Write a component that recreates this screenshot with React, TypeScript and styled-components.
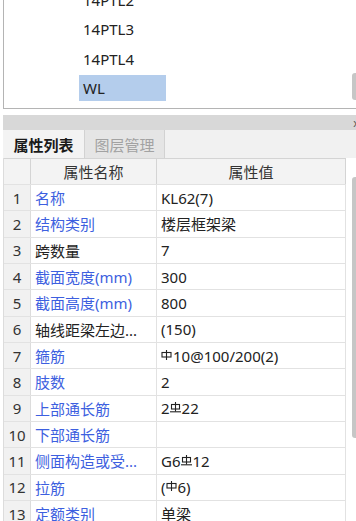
import React from "react";
import styled, { createGlobalStyle } from "styled-components";

const Global = createGlobalStyle`
  html, body { margin: 0; padding: 0; background: #ffffff; }
  body {
    width: 356px; height: 521px; overflow: hidden;
    font-family: "Noto Sans", "Noto Sans CJK SC", sans-serif;
    font-size: 15px; color: #222;
  }
  * { box-sizing: border-box; }
`;

const Page = styled.div`
  width: 356px;
  height: 521px;
  overflow: hidden;
  display: flex;
  flex-direction: column;
  padding-left: 3px;
`;

const TopPanel = styled.div`
  position: relative;
  height: 109px;
  flex: none;
  border-left: 1px solid #b4b4b4;
  border-bottom: 1px solid #b4b4b4;
  overflow: hidden;
  background: #fff;
`;

const List = styled.div`
  display: flex;
  flex-direction: column;
  gap: 3.5px;
  margin-top: -13.5px;
  padding-left: 75px;
`;

const Item = styled.div<{ $sel?: boolean }>`
  height: 26px;
  width: 87px;
  padding-left: 4px;
  display: flex;
  align-items: center;
  background: ${(p) => (p.$sel ? "#b4cdec" : "transparent")};
  color: #222;
`;

const Thumb = styled.div<{ $top: number; $h: number }>`
  position: absolute;
  right: 0;
  top: ${(p) => p.$top}px;
  width: 4px;
  height: ${(p) => p.$h}px;
  background: #c6c6c6;
  border-radius: 3px 0 0 3px;
`;

const Bottom = styled.div`
  position: relative;
  margin-top: 6px;
  flex: 1;
  display: flex;
  flex-direction: column;
`;

const TitleBar = styled.div`
  height: 15px;
  background: #d8d8d8;
  display: flex;
  justify-content: flex-end;
  align-items: center;
  font-size: 11px;
  color: #555;
  line-height: 1;
  margin-right: -3px;
  overflow: hidden;
`;

const TabRow = styled.div`
  height: 28px;
  display: flex;
  background: #f1f1f1;
`;

const Tab = styled.div<{ $active?: boolean }>`
  width: 81px;
  display: flex;
  align-items: center;
  justify-content: center;
  background: ${(p) => (p.$active ? "#f3f3f3" : "#e5e5e5")};
  color: ${(p) => (p.$active ? "#1a1a1a" : "#a2a2a2")};
  font-weight: ${(p) => (p.$active ? 600 : 400)};
  border-right: ${(p) => (p.$active ? "none" : "1px solid #d2d2d2")};
  border-left: ${(p) => (p.$active ? "none" : "1px solid #d2d2d2")};
`;

const Grid = styled.div`
  width: 343px;
  border-left: 1px solid #dcdcdc;
`;

const Row = styled.div<{ $head?: boolean }>`
  display: grid;
  grid-template-columns: 27px 126px 189px;
  height: ${(p) => (p.$head ? 27 : 26.33)}px;
  border-top: ${(p) => (p.$head ? "1px solid #d4d4d4" : "none")};
  border-bottom: 1px solid #e2e2e2;
  background: ${(p) => (p.$head ? "#f3f3f3" : "#fff")};
`;

const NumCell = styled.div`
  background: #f1f1f1;
  border-right: 1px solid #dcdcdc;
  display: flex;
  align-items: center;
  justify-content: center;
  color: #333;
`;

const HeadCell = styled.div`
  border-right: 1px solid #d4d4d4;
  display: flex;
  align-items: center;
  justify-content: center;
  color: #333;
`;

const NameCell = styled.div<{ $blue?: boolean }>`
  border-right: 1px solid #e2e2e2;
  display: flex;
  align-items: center;
  padding-left: 4px;
  white-space: nowrap;
  overflow: hidden;
  color: ${(p) => (p.$blue ? "#3d5fe0" : "#222")};
`;

const ValueCell = styled.div`
  border-right: 1px solid #e2e2e2;
  display: flex;
  align-items: center;
  padding-left: 4px;
  white-space: nowrap;
  color: #222;
`;

const Sym = styled.svg`
  width: 11px;
  height: 11px;
  margin: 0 1px -1px 0;
  align-self: center;
  position: relative;
  top: -1px;
`;

const SymA = () => (
  <Sym viewBox="0 0 11 11" fill="none" stroke="#222" strokeWidth="1.1">
    <line x1="5.5" y1="0" x2="5.5" y2="10" />
    <rect x="1" y="2.5" width="9" height="4.5" />
  </Sym>
);

const SymC = () => (
  <Sym viewBox="0 0 11 11" fill="none" stroke="#222" strokeWidth="1.1">
    <line x1="5.5" y1="0" x2="5.5" y2="9.5" />
    <rect x="1.5" y="2.5" width="8" height="4.5" />
    <line x1="0" y1="9.8" x2="11" y2="9.8" />
  </Sym>
);

type R = { n: number; name: string; blue: boolean; value: React.ReactNode };

const rows: R[] = [
  { n: 1, name: "名称", blue: true, value: "KL62(7)" },
  { n: 2, name: "结构类别", blue: true, value: "楼层框架梁" },
  { n: 3, name: "跨数量", blue: false, value: "7" },
  { n: 4, name: "截面宽度(mm)", blue: true, value: "300" },
  { n: 5, name: "截面高度(mm)", blue: true, value: "800" },
  { n: 6, name: "轴线距梁左边...", blue: false, value: "(150)" },
  { n: 7, name: "箍筋", blue: true, value: <><SymA />10@100/200(2)</> },
  { n: 8, name: "肢数", blue: true, value: "2" },
  { n: 9, name: "上部通长筋", blue: true, value: <>2<SymC />22</> },
  { n: 10, name: "下部通长筋", blue: true, value: "" },
  { n: 11, name: "侧面构造或受...", blue: true, value: <>G6<SymC />12</> },
  { n: 12, name: "拉筋", blue: true, value: <>(<SymA />6)</> },
  { n: 13, name: "定额类别", blue: true, value: "单梁" },
];

export default function App() {
  return (
    <>
      <Global />
      <Page>
        <TopPanel>
          <List>
            <Item>14PTL2</Item>
            <Item>14PTL3</Item>
            <Item>14PTL4</Item>
            <Item $sel>WL</Item>
          </List>
          <Thumb $top={73} $h={27} />
        </TopPanel>
        <Bottom>
          <TitleBar>x</TitleBar>
          <TabRow>
            <Tab $active>属性列表</Tab>
            <Tab>图层管理</Tab>
          </TabRow>
          <Grid>
            <Row $head>
              <HeadCell />
              <HeadCell>属性名称</HeadCell>
              <HeadCell>属性值</HeadCell>
            </Row>
            {rows.map((r) => (
              <Row key={r.n}>
                <NumCell>{r.n}</NumCell>
                <NameCell $blue={r.blue}>{r.name}</NameCell>
                <ValueCell>{r.value}</ValueCell>
              </Row>
            ))}
          </Grid>
          <Thumb $top={62} $h={261} />
        </Bottom>
      </Page>
    </>
  );
}
